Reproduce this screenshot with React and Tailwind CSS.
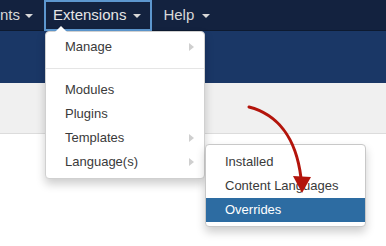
import React from "react";

const Caret = ({ className = "" }) => (
  <span
    className={`inline-block w-0 h-0 border-l-[4px] border-r-[4px] border-t-[4px] border-l-transparent border-r-transparent border-t-[#d8d8d8] ${className}`}
  />
);

const Chevron = () => (
  <span className="absolute right-[10px] top-1/2 -translate-y-1/2 w-0 h-0 border-t-[4px] border-b-[4px] border-l-[5px] border-t-transparent border-b-transparent border-l-[#cfcfcf]" />
);

const MenuItem = ({ label, sub, active }) => (
  <li
    className={`relative h-[24px] flex items-center pl-[19px] ${
      active ? "bg-[#2d6ca2] text-white" : "text-[#3a3a3a]"
    }`}
  >
    {label}
    {sub && <Chevron />}
  </li>
);

export default function App() {
  return (
    <div className="relative w-[386px] h-[246px] overflow-hidden bg-white font-['Liberation_Sans',Arial,sans-serif]">
      {/* Top nav */}
      <nav className="h-[31px] bg-[#13223f] border-b border-[#0d1a30] flex items-stretch text-[15px] text-[#d8d8d8]">
        <div className="flex items-center">
          <span>nts</span>
          <Caret className="ml-[5px] mt-[1px]" />
        </div>
        <div className="ml-[11px] flex items-center border-2 border-[#5d97cf] pl-[7px] pr-[9px] -mb-[1px]">
          <span className="text-[#e6e6e6]">Extensions</span>
          <Caret className="ml-[7px] mt-[1px]" />
        </div>
        <div className="ml-[11px] flex items-center">
          <span>Help</span>
          <Caret className="ml-[8px] mt-[1px]" />
        </div>
      </nav>

      {/* Page header bands */}
      <div className="h-[52px] bg-[#1a3766]" />
      <div className="h-[51px] bg-[#f0f0f0] border-b border-[#dcdcdc]" />

      {/* Extensions dropdown */}
      <div className="absolute left-[45px] top-[31px] w-[160px] bg-white rounded-[4px] border border-[#d0d0d0] shadow-[0_5px_10px_rgba(0,0,0,0.2)] text-[13px]">
        <span className="absolute -top-[6px] left-[9px] w-0 h-0 border-l-[6px] border-r-[6px] border-b-[6px] border-l-transparent border-r-transparent border-b-white" />
        <ul className="pt-[3px] pb-[4px]">
          <MenuItem label="Manage" sub />
          <li className="my-[9px] h-px bg-[#e5e5e5]" />
          <MenuItem label="Modules" />
          <MenuItem label="Plugins" />
          <MenuItem label="Templates" sub />
          <MenuItem label="Language(s)" sub />
        </ul>
      </div>

      {/* Language(s) submenu */}
      <div className="absolute left-[205px] top-[144px] w-[161px] bg-white rounded-[4px] border border-[#c8c8c8] shadow-[0_5px_10px_rgba(0,0,0,0.2)] text-[13px] overflow-hidden">
        <ul className="pt-[5px] pb-[4px]">
          <MenuItem label="Installed" />
          <MenuItem label="Content Languages" />
          <MenuItem label="Overrides" active />
        </ul>
      </div>

      {/* Annotation arrow */}
      <svg className="absolute inset-0 pointer-events-none" width="386" height="246" viewBox="0 0 386 246">
        <path d="M249 107 C 276 114 296 136 301 178" fill="none" stroke="#b3140b" strokeWidth="3" strokeLinecap="round" />
        <polygon points="293,176 311,177 302,193" fill="#b3140b" />
      </svg>
    </div>
  );
}
